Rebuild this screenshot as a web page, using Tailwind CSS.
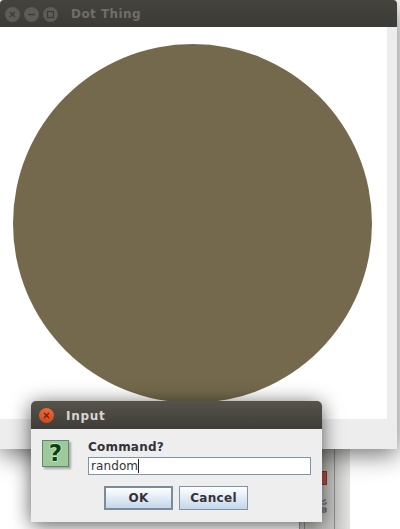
<!DOCTYPE html>
<html lang="en">
<head>
  <meta charset="UTF-8" />
  <title>Dot Thing</title>
  <script src="https://cdn.jsdelivr.net/npm/@tailwindcss/browser@4"></script>
</head>
<body class="relative w-[400px] h-[529px] overflow-hidden bg-white font-['DejaVu_Sans',sans-serif]">
  <!-- window behind -->
  <div class="absolute left-[299px] top-[440px] w-[51px] h-[89px] bg-gradient-to-r from-[#c4c4c2] from-70% to-[#e2e2e0]">
    <div class="absolute left-0 top-0 w-px h-full bg-[#8e8e8c]"></div>
    <div class="absolute left-[5px] top-0 w-px h-full bg-[#8e8e8c]"></div>
    <div class="absolute left-[35px] top-0 w-px h-full bg-[#8e8e8c]"></div>
    <div class="absolute left-[23px] top-[31px] w-[5px] h-[14px] bg-[#b9534e] border-y border-r border-[#8a3a38]"></div>
    <svg class="absolute left-[23px] top-[58px]" width="5" height="15" viewBox="0 0 5 15" fill="none" stroke="#4a5560" stroke-width="1"><path d="M0 3h3V1M0 6h4V4M0 10h4v2H0M0 14h4v-2"/></svg>
  </div>

  <!-- main window -->
  <div class="absolute left-0 top-0 w-[397px] h-[449px] flex flex-col bg-[#ededed] rounded-t-[4px] shadow-[0_6px_24px_rgba(0,0,0,0.55)]">
    <div class="h-[27px] shrink-0 flex items-center pt-px pl-[5px] gap-[4px] bg-gradient-to-b from-[#45433d] to-[#3c3b37] rounded-t-[4px]">
      <span class="w-[15px] h-[15px] rounded-full bg-[#5d5c57] flex items-center justify-center">
        <svg width="7" height="7" viewBox="0 0 7 7"><path d="M1 1l5 5M6 1l-5 5" stroke="#3c3b37" stroke-width="1.2"/></svg>
      </span>
      <span class="w-[15px] h-[15px] rounded-full bg-[#5d5c57] flex items-center justify-center">
        <svg width="9" height="3" viewBox="0 0 9 3"><path d="M1 1.5h7" stroke="#3c3b37" stroke-width="1.3"/></svg>
      </span>
      <span class="w-[15px] h-[15px] rounded-full bg-[#5d5c57] flex items-center justify-center">
        <svg width="9" height="9" viewBox="0 0 9 9"><rect x="1.5" y="1.5" width="6" height="6" fill="none" stroke="#3c3b37" stroke-width="1.2"/></svg>
      </span>
      <span class="ml-[9px] text-[12px] leading-none font-bold tracking-[0.45px] text-[#6f6e69]">Dot Thing</span>
    </div>
    <div class="w-[387px] h-[392px] shrink-0 bg-white pl-[13px] pt-[17px]">
      <div class="w-[359px] h-[359px] rounded-full bg-[#74694c]"></div>
    </div>
  </div>

  <!-- input dialog -->
  <div class="absolute left-[31px] top-[401px] w-[291px] h-[121px] flex flex-col bg-[#eeeeee] rounded-t-[5px] shadow-[0_3px_20px_rgba(0,0,0,0.65)]">
    <div class="h-[28px] shrink-0 flex items-center pt-px pl-[8px] bg-gradient-to-b from-[#55534a] to-[#3e3d38] rounded-t-[5px]">
      <span class="w-[15px] h-[15px] rounded-full bg-gradient-to-b from-[#ec6a3c] to-[#d0481f] flex items-center justify-center">
        <svg width="7" height="7" viewBox="0 0 7 7"><path d="M1 1l5 5M6 1l-5 5" stroke="#5a2a18" stroke-width="1.2"/></svg>
      </span>
      <span class="ml-[12px] text-[12px] leading-none font-bold tracking-[0.7px] text-[#d8d6cf]">Input</span>
    </div>
    <div class="flex pl-[11px] pt-[11px]">
      <div class="w-[27px] h-[27px] shrink-0 flex items-center justify-center bg-[#9dc99d] border border-[#5f8a6a] shadow-[2px_2px_2px_rgba(0,0,0,0.3)] text-[23px] leading-none font-bold text-[#0c420c] [text-shadow:1px_0_0_#c8e6c8,-1px_0_0_#c8e6c8,0_1px_0_#c8e6c8,0_-1px_0_#c8e6c8]">?</div>
      <div class="ml-[19px] w-[223px]">
        <div class="h-[17px] text-[12px] leading-[14px] font-bold tracking-[0.2px] text-[#33333a]">Command?</div>
        <div class="h-[18px] flex items-center pl-[2px] bg-white border border-[#7e94a8] text-[12px] leading-none tracking-[0.1px] text-[#333333]">random<span class="w-px h-[14px] bg-[#222222]"></span></div>
      </div>
    </div>
    <div class="flex pl-[73px] pt-[11px] gap-[6px]">
      <button class="w-[69px] h-[24px] border-2 border-[#7a8b9c] bg-gradient-to-b from-white to-[#c4d7ea] text-[12px] font-bold tracking-[0.3px] text-[#33333a]">OK</button>
      <button class="w-[69px] h-[24px] border border-[#7e94a8] bg-gradient-to-b from-white to-[#c4d7ea] text-[12px] font-bold tracking-[0.3px] text-[#33333a]">Cancel</button>
    </div>
  </div>
</body>
</html>
